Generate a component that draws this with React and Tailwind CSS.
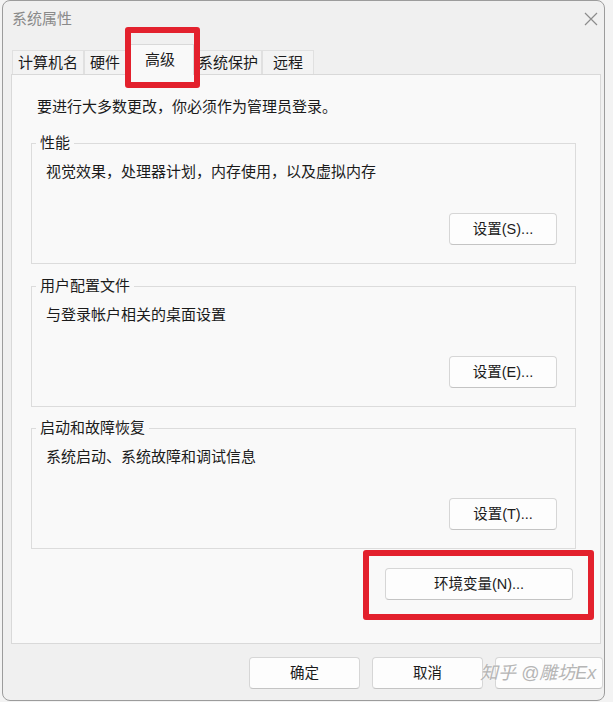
import React from 'react';

const font = "font-['Liberation_Sans','Noto_Sans_CJK_SC',sans-serif]";

const Btn = ({ children, className = '', disabled }) => (
  <button
    className={`h-[32px] rounded-[4px] border border-[#d6d6d6] border-b-[#c4c4c4] bg-[#fdfdfd] text-[14.5px] leading-[20px] ${
      disabled ? 'text-[#a3a3a3]' : 'text-[#1b1b1b]'
    } ${className}`}
  >
    {children}
  </button>
);

// group box with the legend sitting on the top line
const Group = ({ title, desc, label, className = '' }) => (
  <fieldset className={`ml-[19px] w-[545px] border border-[#dcdcdc] ${className}`}>
    <legend className="ml-[4px] px-[4px] text-[15px] leading-[20px] text-[#1b1b1b]">{title}</legend>
    <div className="pl-[14px] pt-[9px] text-[15px] leading-[20px] text-[#1b1b1b]">{desc}</div>
    <div className="flex justify-end pr-[18px] pt-[31px] pb-[18px]">
      <Btn className="w-[108px]">{label}</Btn>
    </div>
  </fieldset>
);

const tabs = [
  { name: '计算机名', w: 'w-[72px]' },
  { name: '硬件', w: 'w-[42px]' },
  { name: '高级', w: 'w-[68px]', active: true },
  { name: '系统保护', w: 'w-[68px]' },
  { name: '远程', w: 'w-[52px]' },
];

const App = () => {
  return (
    <div className={`w-[613px] h-[702px] bg-[#f3f3f3] pl-[2px] ${font}`}>
      <div className="relative w-[603px] h-[701px] rounded-[8px] border border-[#9c9c9c] bg-[#f0f0f0] overflow-hidden">
        {/* Title bar */}
        <div className="flex h-[43px] justify-between pl-[9px] pr-[6px]">
          <div className="pt-[8px] text-[15px] leading-[20px] text-[#8a8a8a]">系统属性</div>
          <svg className="mt-[11px]" width="14" height="14" viewBox="0 0 14 14">
            <path d="M1 1 L13 13 M13 1 L1 13" stroke="#8c8c8c" strokeWidth="1.2" fill="none" />
          </svg>
        </div>

        {/* Tabs */}
        <div className="flex h-[30px] items-end pl-[9px]">
          {tabs.map((t) =>
            t.active ? (
              <div
                key={t.name}
                className={`relative z-10 -mb-px flex h-[31px] ${t.w} justify-center border border-b-0 border-[#d9d9d9] bg-[#f9f9f9] pt-[5px] text-[15px] leading-[20px] text-[#1b1b1b]`}
              >
                {t.name}
              </div>
            ) : (
              <div
                key={t.name}
                className={`flex h-[24px] ${t.w} items-center justify-center border border-b-0 border-[#e0e0e0] bg-[#f3f3f3] text-[15px] leading-[20px] text-[#1b1b1b]`}
              >
                {t.name}
              </div>
            )
          )}
        </div>

        {/* Tab panel */}
        <div className="ml-[8px] h-[570px] w-[590px] border border-[#d9d9d9] bg-[#f9f9f9]">
          <div className="pl-[25px] pt-[22px] text-[15px] leading-[20px] text-[#1b1b1b]">
            要进行大多数更改，你必须作为管理员登录。
          </div>
          <Group className="mt-[16px]" title="性能" desc="视觉效果，处理器计划，内存使用，以及虚拟内存" label="设置(S)..." />
          <Group className="mt-[12px]" title="用户配置文件" desc="与登录帐户相关的桌面设置" label="设置(E)..." />
          <Group className="mt-[11px]" title="启动和故障恢复" desc="系统启动、系统故障和调试信息" label="设置(T)..." />
          <div className="flex justify-end pr-[27px] pt-[19px]">
            <Btn className="w-[188px]">环境变量(N)...</Btn>
          </div>
        </div>

        {/* Footer buttons (third one's label is hidden under the watermark) */}
        <div className="ml-[246px] mt-[13px] flex gap-[12px]">
          <Btn className="w-[111px]">确定</Btn>
          <Btn className="w-[111px]">取消</Btn>
          <Btn className="w-[108px] bg-[#f6f6f6]" disabled />
        </div>

        {/* watermark */}
        <div className="absolute left-[477px] top-[661px] z-20 text-[18px] italic leading-[22px] text-[#b5b5b5] [text-shadow:0_0_2px_#ffffff]">
          知乎 @雕坊Ex
        </div>

        {/* red annotation boxes */}
        <div className="absolute left-[122px] top-[26px] z-20 h-[61px] w-[75px] rounded-[3px] border-[6px] border-[#e3212d]" />
        <div className="absolute left-[360px] top-[549px] z-20 h-[70px] w-[231px] rounded-[3px] border-[6px] border-[#e3212d]" />
      </div>
    </div>
  );
};

export default App;
